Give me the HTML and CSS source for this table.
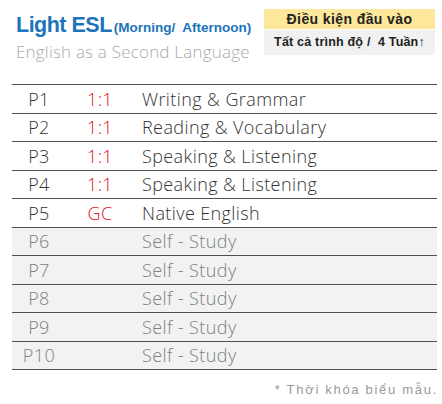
FILE: index.html
```html
<!DOCTYPE html>
<html lang="vi">
<head>
<meta charset="utf-8">
<link rel="stylesheet" href="styles.css">
</head>
<body>
<div class="page">
  <header class="header">
    <div class="title-block">
      <h1 class="title"><span class="title-main">Light ESL</span><span class="title-sub">(Morning/&nbsp; Afternoon)</span></h1>
      <p class="subtitle">English as a Second Language</p>
    </div>
    <div class="entry">
      <div class="entry-head">Điều kiện đầu vào</div>
      <div class="entry-body">Tất cả trình độ /&nbsp; 4 Tuần↑</div>
    </div>
  </header>

  <div class="table">
    <div class="row"><span class="period">P1</span><span class="type">1:1</span><span class="subject">Writing &amp; Grammar</span></div>
    <div class="row"><span class="period">P2</span><span class="type">1:1</span><span class="subject">Reading &amp; Vocabulary</span></div>
    <div class="row"><span class="period">P3</span><span class="type">1:1</span><span class="subject">Speaking &amp; Listening</span></div>
    <div class="row"><span class="period">P4</span><span class="type">1:1</span><span class="subject">Speaking &amp; Listening</span></div>
    <div class="row"><span class="period">P5</span><span class="type">GC</span><span class="subject">Native English</span></div>
    <div class="row self"><span class="period">P6</span><span class="type"></span><span class="subject">Self - Study</span></div>
    <div class="row self"><span class="period">P7</span><span class="type"></span><span class="subject">Self - Study</span></div>
    <div class="row self"><span class="period">P8</span><span class="type"></span><span class="subject">Self - Study</span></div>
    <div class="row self"><span class="period">P9</span><span class="type"></span><span class="subject">Self - Study</span></div>
    <div class="row self"><span class="period">P10</span><span class="type"></span><span class="subject">Self - Study</span></div>
  </div>

  <p class="note">* Thời khóa biểu mẫu.</p>
</div>
</body>
</html>
```

FILE: styles.css
```css
* { box-sizing: border-box; }
html, body { margin: 0; padding: 0; background: #fff; }
body { width: 442px; height: 404px; overflow: hidden; }

.page {
  width: 442px;
  font-family: "Liberation Sans", Arial, sans-serif;
}

.header {
  height: 84px;
  display: flex;
  justify-content: space-between;
  align-items: flex-start;
}

.title-block {
  padding: 15px 0 0 16px;
}

.title {
  margin: 0;
  font-size: 21.5px;
  line-height: 21.5px;
  color: #1c74ba;
  font-weight: bold;
  white-space: nowrap;
}

.title-main {
  letter-spacing: -0.5px;
}

.title-sub {
  font-size: 13.5px;
  margin-left: 2px;
}

.subtitle {
  margin: 3px 0 0 0;
  font-family: "Open Sans", "Noto Sans", sans-serif;
  font-weight: 300;
  font-size: 17px;
  line-height: 20px;
  letter-spacing: 0.2px;
  color: #aaaaaa;
  white-space: nowrap;
}

.entry {
  margin: 9px 7px 0 0;
  width: 171px;
  font-weight: bold;
  color: #222;
  text-align: center;
  white-space: nowrap;
}

.entry-head {
  height: 20px;
  line-height: 20px;
  background: #fce79a;
  font-size: 14px;
  letter-spacing: 0.4px;
}

.entry-body {
  margin-top: 1px;
  height: 25px;
  line-height: 25px;
  background: #f0f1f0;
  font-size: 12.5px;
  letter-spacing: 0.2px;
}

.table {
  margin: 0 5px 0 12px;
  border-top: 1.5px solid #505050;
}

.row {
  display: grid;
  grid-template-columns: 54px 68px 1fr;
  align-items: center;
  height: 28.5px;
  border-bottom: 1.5px solid #505050;
  font-family: "Open Sans", "Noto Sans", sans-serif;
  font-weight: 300;
  font-size: 18px;
  letter-spacing: 0.4px;
  color: #333;
  white-space: nowrap;
}

.period { text-align: center; }
.type { text-align: center; color: #e0101c; }
.subject { padding-left: 8px; }

.row.self {
  background: #f1f2f1;
  color: #808080;
}

.note {
  margin: 12px 4px 0 0;
  text-align: right;
  font-size: 13px;
  letter-spacing: 1.7px;
  color: #999;
  line-height: 16px;
}
```
